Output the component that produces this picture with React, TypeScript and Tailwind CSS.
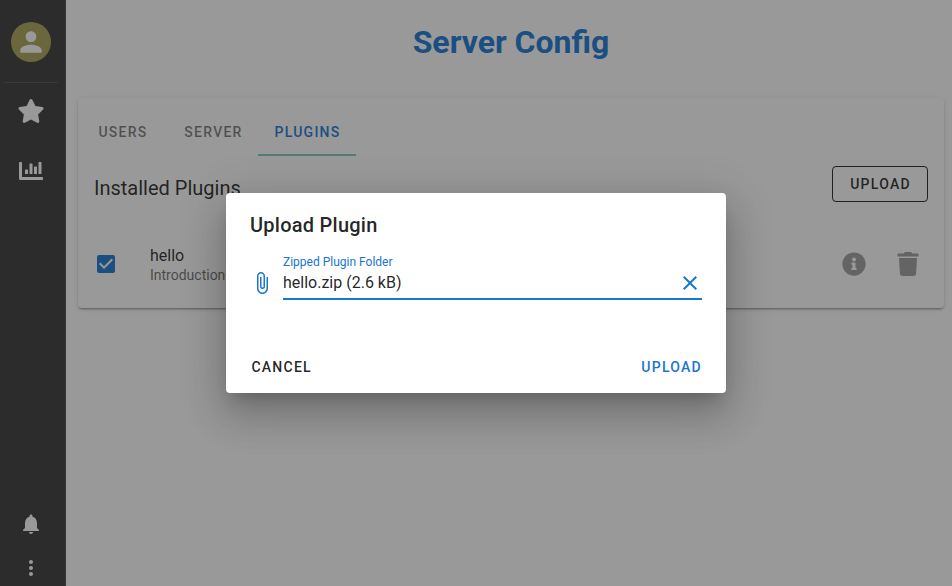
import React from "react";
import { MdAttachFile, MdCheckBox, MdClose, MdMoreVert, MdNotifications, MdPerson } from "react-icons/md";
import { FaChartBar, FaInfoCircle, FaStar, FaTrash } from "react-icons/fa";

const BUTTON_TEXT = "text-[14px] font-medium uppercase leading-5 tracking-[0.0892857em]";

function Sidebar() {
  return (
    <nav className="flex w-[66px] shrink-0 flex-col items-center border-r border-[#484848] bg-[#363636] pr-[3px] text-white">
      <div className="mt-[22px] flex h-10 w-10 items-center justify-center rounded-full bg-[#aaa353]">
        <MdPerson size={32} />
      </div>
      <div className="mt-5 h-px w-[54px] bg-[#4f4f4f]" />
      <FaStar className="mt-4 h-6 w-7" />
      <FaChartBar className="mt-9" size={24} />
      <MdNotifications className="mt-auto" size={24} />
      <MdMoreVert className="mt-5 mb-[6px]" size={24} />
    </nav>
  );
}

function Tabs() {
  return (
    <div className="flex h-12 text-black/54">
      <button className={`w-[90px] ${BUTTON_TEXT}`}>Users</button>
      <button className={`w-[90px] pl-px ${BUTTON_TEXT}`}>Server</button>
      <button className={`w-[98px] border-b-2 border-[#80cbc4] pt-[2px] pl-px text-[#1976d2] ${BUTTON_TEXT}`}>Plugins</button>
    </div>
  );
}

function PluginsCard() {
  return (
    <section className="mr-2 ml-3 h-[210px] rounded bg-white pt-[10px] shadow-[0_3px_1px_-2px_rgba(0,0,0,0.2),0_2px_2px_0_rgba(0,0,0,0.14),0_1px_5px_0_rgba(0,0,0,0.12)]">
      <Tabs />
      <div className="flex h-16 items-center justify-between px-4">
        <h2 className="text-[20px] leading-[30px]">Installed Plugins</h2>
        <button className={`mb-2 h-9 w-24 rounded border border-black/87 pl-px ${BUTTON_TEXT}`}>Upload</button>
      </div>
      <div className="mt-3 flex h-16 items-center px-4">
        <MdCheckBox size={24} className="text-[#1976d2]" />
        <div className="ml-8 flex-1 pt-[2px]">
          <div className="text-[16px] leading-5">hello</div>
          <div className="text-[14px] leading-[18px] text-black/60">Introduction</div>
        </div>
        <FaInfoCircle size={24} className="text-[#9e9e9e]" />
        <FaTrash size={24} className="mr-2 ml-[30px] text-[#9e9e9e]" />
      </div>
    </section>
  );
}

function UploadDialog() {
  return (
    <div className="flex h-[200px] w-[500px] flex-col rounded bg-white px-6 pt-4 shadow-[0_11px_15px_-7px_rgba(0,0,0,0.2),0_24px_38px_3px_rgba(0,0,0,0.14),0_9px_46px_8px_rgba(0,0,0,0.12)]">
      <h3 className="text-[20px] font-medium leading-8 tracking-[0.0125em]">Upload Plugin</h3>
      <div className="mt-[11px] flex">
        <MdAttachFile size={24} className="mt-[19px] mr-[9px] text-[#1976d2]" />
        <div className="h-12 flex-1 border-b-2 border-[#1976d2]">
          <div className="pt-[3px] text-[12px] leading-[15px] text-[#1976d2]">Zipped Plugin Folder</div>
          <div className="mt-px flex items-center justify-between">
            <span className="text-[16px] leading-6">hello.zip (2.6 kB)</span>
            <MdClose size={24} className="text-[#1976d2]" />
          </div>
        </div>
      </div>
      <div className="mt-auto mb-4 flex justify-between">
        <button className={`ml-[1.4px] ${BUTTON_TEXT}`}>Cancel</button>
        <button className={`text-[#1976d2] ${BUTTON_TEXT}`}>Upload</button>
      </div>
    </div>
  );
}

export default function App() {
  return (
    <div className="relative flex h-screen overflow-hidden bg-white font-[Roboto,sans-serif] text-black/87">
      <Sidebar />
      <main className="flex-1">
        <h1 className="flex h-[98px] items-start justify-center pt-[18px] pl-1 text-[32px] font-bold leading-12 text-[#1976d2]">
          Server Config
        </h1>
        <PluginsCard />
      </main>
      <div className="absolute inset-0 flex items-center justify-center bg-[#212121]/46">
        <UploadDialog />
      </div>
    </div>
  );
}
